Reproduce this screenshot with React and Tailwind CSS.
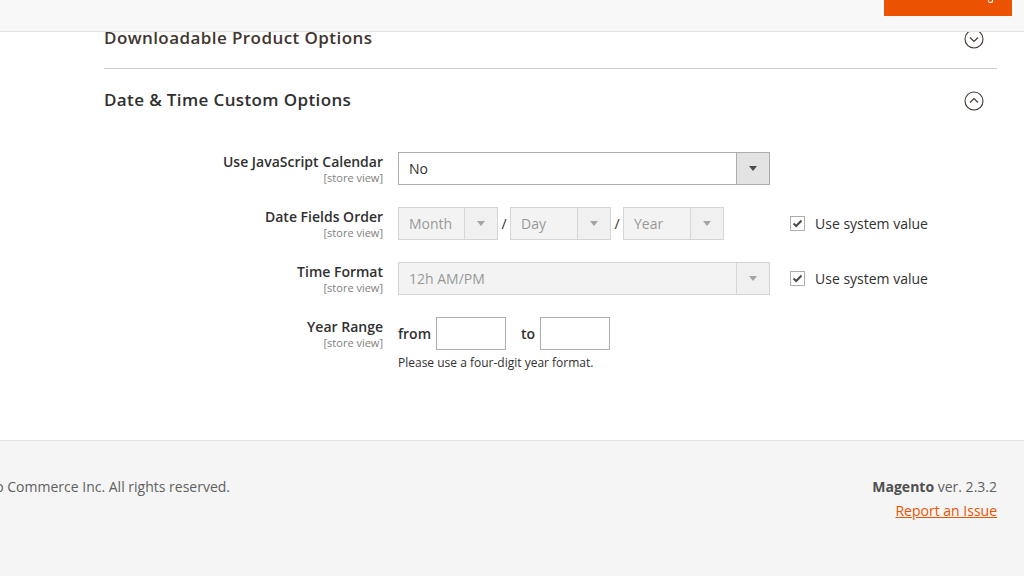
import React from 'react';

const Arrow = ({ color = '#514943' }) => (
  <svg width="8" height="5" viewBox="0 0 8 5">
    <polygon points="0,0 8,0 4,5" fill={color} />
  </svg>
);

const CircleChevron = ({ up }) => (
  <svg width="20" height="20" viewBox="0 0 20 20" fill="none" stroke="#41362f" strokeWidth="1.1">
    <circle cx="10" cy="10" r="9" />
    {up ? <polyline points="6,11.5 10,7.5 14,11.5" /> : <polyline points="6,8.5 10,12.5 14,8.5" />}
  </svg>
);

const Select = ({ value, width, disabled }) => (
  <div
    className={`flex h-[33px] border border-[#adadad] ${disabled ? 'bg-[#e9e9e9] opacity-50' : 'bg-white'}`}
    style={{ width }}
  >
    <div className="flex-1 flex items-center pl-[10px] text-[14px] text-[#303030]">{value}</div>
    <div className="w-[33px] flex items-center justify-center bg-[#e3e3e3] border-l border-[#adadad]">
      <Arrow />
    </div>
  </div>
);

const Checkbox = () => (
  <div className="flex items-center gap-[10px]">
    <div className="w-[15px] h-[15px] border border-[#adadad] bg-white flex items-center justify-center">
      <svg width="11" height="9" viewBox="0 0 11 9" fill="none" stroke="#514943" strokeWidth="2">
        <polyline points="1.5,4.5 4.2,7 9.5,1.5" />
      </svg>
    </div>
    <span className="text-[14px] text-[#303030]">Use system value</span>
  </div>
);

const Row = ({ label, children }) => (
  <div className="flex items-start">
    <div className="w-[279px] text-right pt-[1px]">
      <div className="text-[14px] leading-[18px] font-semibold text-[#303030]">{label}</div>
      <div className="text-[11px] leading-[13px] text-[#808080]">[store view]</div>
    </div>
    <div className="ml-[15px]">{children}</div>
  </div>
);

export default function App() {
  return (
    <div className="relative w-full h-[576px] overflow-hidden bg-white" style={{ fontFamily: '"Open Sans", sans-serif' }}>
      <div className="absolute top-0 left-0 right-0 h-[32px] bg-[#f8f8f8] border-b border-[#e3e3e3] z-10 flex justify-end">
        <div className="relative mr-[12px] w-[128px] h-[16px] bg-[#eb5202]">
          <div className="absolute right-[19px] top-0 w-[5px] h-[3px] border-x-[1.5px] border-b-[1.5px] border-white rounded-b-[3px]" />
        </div>
      </div>

      <div className="ml-[104px] w-[893px]">
        <div className="flex items-center justify-between h-[69px] pt-[8px] border-b border-[#cccccc]">
          <span className="text-[17px] leading-[20px] font-semibold tracking-[0.025em] text-[#41362f]">Downloadable Product Options</span>
          <div className="mr-[13px] translate-y-[1px]"><CircleChevron /></div>
        </div>

        <div className="flex items-center justify-between h-[20px] mt-[21px]">
          <span className="text-[17px] leading-[20px] font-semibold tracking-[0.022em] text-[#303030]">Date &amp; Time Custom Options</span>
          <div className="mr-[13px] translate-y-[1px]"><CircleChevron up /></div>
        </div>

        <div className="mt-[42px] flex flex-col gap-[22px]">
          <Row label="Use JavaScript Calendar">
            <Select value="No" width={372} />
          </Row>
          <Row label="Date Fields Order">
            <div className="flex items-center">
              <Select value="Month" width={100} disabled />
              <span className="w-[12px] text-center text-[14px] text-[#303030]">/</span>
              <Select value="Day" width={101} disabled />
              <span className="w-[12px] text-center text-[14px] text-[#303030]">/</span>
              <Select value="Year" width={101} disabled />
              <div className="ml-[66px]"><Checkbox /></div>
            </div>
          </Row>
          <Row label="Time Format">
            <div className="flex items-center">
              <Select value="12h AM/PM" width={372} disabled />
              <div className="ml-[20px]"><Checkbox /></div>
            </div>
          </Row>
          <Row label="Year Range">
            <div>
              <div className="flex items-center text-[14px] font-semibold text-[#303030]">
                <span>from</span>
                <div className="ml-[5px] w-[70px] h-[33px] border border-[#adadad] bg-white" />
                <span className="ml-[15px]">to</span>
                <div className="ml-[5px] w-[70px] h-[33px] border border-[#adadad] bg-white" />
              </div>
              <div className="mt-[5px] text-[12px] leading-[15px] text-[#303030]">Please use a four-digit year format.</div>
            </div>
          </Row>
        </div>
      </div>

      <div className="mt-[70px] border-t border-[#e3e3e3] bg-[#f5f5f5] h-[200px] pt-[36px] flex justify-between">
        <div className="ml-[-172px] text-[14px] leading-[20px] text-[#5f5f5f] whitespace-nowrap">
          Copyright © 2019 Magento Commerce Inc. All rights reserved.
        </div>
        <div className="mr-[27px] text-right text-[14px] leading-[20px] text-[#5f5f5f]">
          <div><span className="font-bold text-[#4f4f4f]">Magento</span> ver. 2.3.2</div>
          <div className="mt-[4px]"><a className="text-[#eb5202] underline">Report an Issue</a></div>
        </div>
      </div>
    </div>
  );
}
